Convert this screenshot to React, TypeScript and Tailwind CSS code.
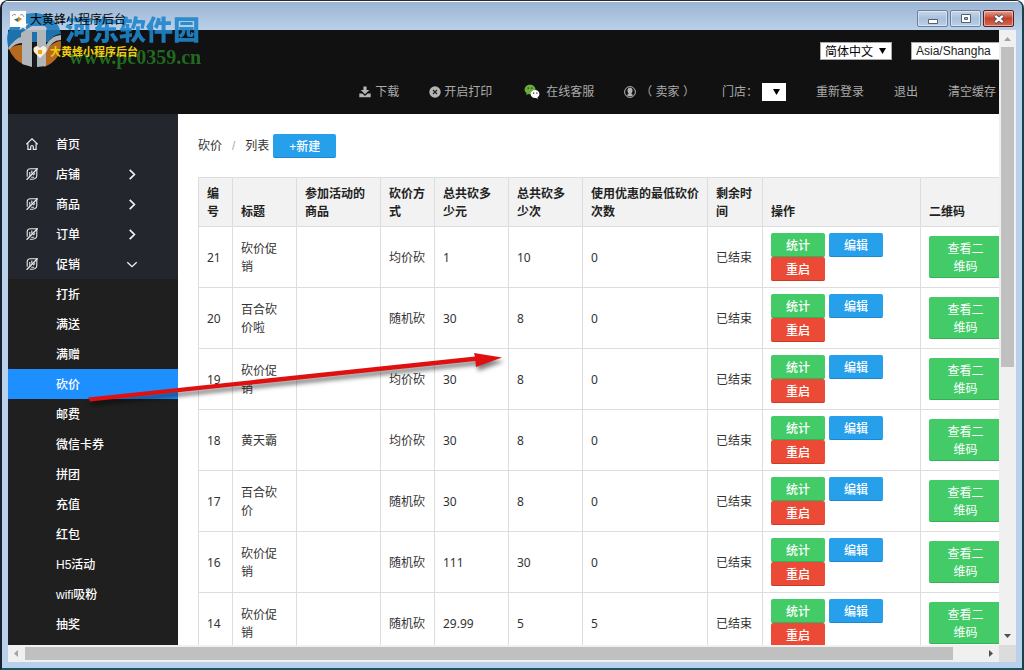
import type { ReactNode } from "react";

const crisp = "font-['Liberation_Sans','Noto_Sans_CJK_SC',sans-serif]";

const menu = ["首页", "店铺", "商品", "订单", "促销"];
const submenu = ["打折", "满送", "满赠", "砍价", "邮费", "微信卡券", "拼团", "充值", "红包", "H5活动", "wifi吸粉", "抽奖"];

const columns = [
  { label: "编号", width: "w-[34px]" },
  { label: "标题", width: "w-16" },
  { label: "参加活动的商品", width: "w-[84px]" },
  { label: "砍价方式", width: "w-[54px]" },
  { label: "总共砍多少元", width: "w-[74px]" },
  { label: "总共砍多少次", width: "w-[74px]" },
  { label: "使用优惠的最低砍价次数", width: "w-[125px]" },
  { label: "剩余时间", width: "w-[55px]" },
  { label: "操作", width: "w-[158px]" },
  { label: "二维码", width: "w-[100px]" },
];

const rows = [
  ["21", "砍价促销", "", "均价砍", "1", "10", "0", "已结束"],
  ["20", "百合砍价啦", "", "随机砍", "30", "8", "0", "已结束"],
  ["19", "砍价促销", "", "均价砍", "30", "8", "0", "已结束"],
  ["18", "黄天霸", "", "均价砍", "30", "8", "0", "已结束"],
  ["17", "百合砍价", "", "随机砍", "30", "8", "0", "已结束"],
  ["16", "砍价促销", "", "随机砍", "111", "30", "0", "已结束"],
  ["14", "砍价促销", "", "随机砍", "29.99", "5", "5", "已结束"],
];

function HomeIcon() {
  return (
    <svg className="size-3" viewBox="0 0 12 12" fill="none" stroke="#e8e8e8" strokeWidth="1.2">
      <path d="M.3 6.4 6 .8l5.700 5.600M1.900 5.200v6.200h2.800V8.300q1.300-1.600 2.600 0v3.100h2.800V5.200" />
    </svg>
  );
}

function LeafIcon() {
  return (
    <svg className="size-3" viewBox="0 0 12 12" fill="none" stroke="#ececec" strokeWidth="1.1">
      <path d="M1.200 8.800V3.800Q1.200.8 4.500.8h6.300v6.400q0 4-4.300 4H3.800" />
      <path d="M.6 11.800 11.600.4" strokeWidth="1.300" />
      <path d="M3.800 7.800V4M5.800 5.600V2.600M5.200 9.200h3M7.200 7.200 9 5.400" />
    </svg>
  );
}

function Chevron({ open }: { open: boolean }) {
  return (
    <svg className="size-3" viewBox="0 0 12 12" fill="none" stroke="#f2f2f2" strokeWidth={open ? "1.3" : "1.7"}>
      <path d={open ? "m1.3 4.2 4.7 4.5 4.7-4.5" : "m3.700 1.900 4.700 4.600-4.700 4.600"} />
    </svg>
  );
}

function DownArrow() {
  return (
    <svg className="pointer-events-none absolute top-[6px] right-[6px] h-[6px] w-[7px]" viewBox="0 0 7 6">
      <path d="M0 0h7L3.500 6Z" fill="#000" />
    </svg>
  );
}

function DownloadIcon() {
  return (
    <svg className="h-3 w-3" viewBox="0 0 12 12" fill="#b5b5b5">
      <path d="M4.400.4h3.200v3.600h2.700L6 8.300 1.700 4h2.700ZM.3 7.400h3L6 10l2.700-2.600h3v3.800H.3Z" />
    </svg>
  );
}

function CloseCircleIcon() {
  return (
    <svg className="h-3 w-3" viewBox="0 0 12 12">
      <circle cx="6" cy="6" r="5.7" fill="#b5b5b5" />
      <path d="m4 4 4 4M8 4 4 8" stroke="#222" strokeWidth="1.2" />
    </svg>
  );
}

function WechatIcon() {
  return (
    <svg className="h-4 w-4" viewBox="0 0 16 16">
      <path d="M6 .8C2.900.8.6 2.900.6 5.600c0 1.700.8 3 2.100 3.800l-.6 1.900 2.200-1.200c3.800.8 7.200-1.300 7.200-4.500C11.500 2.900 9.100.8 6 .8Z" fill="#69ae3b" />
      <path d="M11.200 5.900c-2.600 0-4.600 1.800-4.600 4.200s2.300 4.500 5.500 3.900l1.700.9-.4-1.500c1.200-.7 2-1.900 2-3.300 0-2.300-1.700-4.200-4.200-4.200Z" fill="#fafafa" />
      <path d="M3.600 4.200h1.300M7.200 4.200h1.300M9 9.200h1.200M12.200 9.200h1.200" stroke="#2a2a2a" strokeWidth="1.200" />
    </svg>
  );
}

function UserIcon() {
  return (
    <svg className="h-3 w-3" viewBox="0 0 12 12">
      <circle cx="6" cy="6" r="5.4" fill="none" stroke="#b5b5b5" />
      <path d="M6 1.800c1.900 0 2.700 1.200 2.500 2.900-.2 1.400-.6 2-1 2.500v.8l2 .9A5 5 0 0 1 2.500 8.900l2-.9v-.8C3.800 6.500 3.500 5.800 3.500 4.500 3.500 2.900 4.400 1.800 6 1.800Z" fill="#b5b5b5" />
    </svg>
  );
}

function WindowControls() {
  const base = "flex h-[17px] items-center justify-center rounded-[2px] border shadow-[inset_0_0_0_1px_#ffffff70]";
  const cool = "w-[31px] border-[#6d7f99] bg-linear-to-b from-[#c7d7ea] via-[#a9c0dc] to-[#b9d0e9]";
  return (
    <div className="flex gap-[2px]">
      <button aria-label="最小化" className={`${base} ${cool}`}>
        <svg className="h-3 w-3" viewBox="0 0 12 12"><path d="M1.500 6.500h9v4h-9Z" fill="#fff" stroke="#54606f" /></svg>
      </button>
      <button aria-label="最大化" className={`${base} ${cool}`}>
        <svg className="h-3 w-3" viewBox="0 0 12 12"><path d="M1.500 1.500h9v8h-9Z" fill="#fff" stroke="#54606f" /><path d="M4.500 4.500h3v2h-3Z" fill="#9db7d6" stroke="#54606f" /></svg>
      </button>
      <button aria-label="关闭" className={`${base} w-[31px] border-[#5b1d1d] bg-linear-to-b from-[#dfa091] via-[#c4402c] to-[#d46a50]`}>
        <svg className="h-3 w-3" viewBox="0 0 12 12"><path d="m2 2.500 8 7M10 2.500l-8 7" stroke="#4c4c58" strokeWidth="4" /><path d="m2.300 2.800 7.400 6.400M9.700 2.800 2.300 9.200" stroke="#fff" strokeWidth="2.400" /></svg>
      </button>
    </div>
  );
}

function Watermark() {
  return (
    <div className="pointer-events-none absolute top-2 left-1 flex">
      <svg className="h-[60px] w-[59px] opacity-90" viewBox="0 0 59 60">
        <path d="M1 30C2 15 13 4 28 4s26 10 27 21C50 25 46 28 42 33H12L3 40Q1 35 1 30Z" fill="#1f7dbd" />
        <path d="M3 40Q10 35 19 36v20Q7 51 3 40Z" fill="#c9741f" />
        <path d="M27 34h4v24h-4Z" fill="#1a1d20" />
        <path d="M38 58Q36 45 44 37 50 32 55 32 56 51 38 58Z" fill="#c9741f" />
        <path d="M2 39Q10 29 15 28V24L26 17H38Q42 18 40 22V57l-9 1V23H26V58l-10-3V34Q9 34 3 41Z" fill="#c3c8ce" />
        <path d="M40 36Q46 26 55 26v5Q45 31 40 44Z" fill="#c3c8ce" />
        <path d="m17 11 1.500 3.500 4 .2-3 2.500 1 3.800-3.500-2.200-3.500 2.200 1-3.800-3-2.500 4-.2Z" fill="#e4eaf0" />
      </svg>
      <div className="flex flex-col pt-1 opacity-90">
        <span className="font-['Noto_Sans_CJK_SC',sans-serif] text-[27px] leading-8 font-black text-[#1f86cc]">河东软件园</span>
        <span className="pt-[2px] pl-1 font-['Liberation_Serif',serif] text-[20px] leading-5 font-bold text-[#227522]">www.pc0359.cn</span>
      </div>
    </div>
  );
}

function Action({ tone, children }: { tone: string; children: ReactNode }) {
  return (
    <button className={`h-6 w-[54px] rounded-[2px] border-b pt-[2px] text-xs leading-[21px] font-medium text-white ${tone}`}>{children}</button>
  );
}

export default function App() {
  return (
    <div className={`${crisp} relative flex h-screen flex-col overflow-hidden rounded-t-lg border-t border-l-2 border-r-2 border-b-2 border-t-[#222b3a] border-l-[#182230] border-r-[#17424a] border-b-[#1b5560] bg-[#b9d1ea] text-xs text-[#333]`}>
      <div className="flex h-[29px] shrink-0 items-start justify-between border-t border-white bg-linear-to-b from-[#9bb5d3] to-[#bad0e8] pt-2 pr-2 pl-2">
        <div className="z-10 flex items-center gap-1">
          <svg className="size-4 bg-white" viewBox="0 0 16 16" fill="none">
            <path d="M2 5q2-3 4-1M10 4q3-2 4 2" stroke="#999" />
            <path d="M8 5.500 12 8 8 11Z" fill="#c9922e" />
            <path d="M4 8.500 8 7v4Z" fill="#2f6f74" />
          </svg>
          <span className="pt-[2px] text-black">大黄蜂小程序后台</span>
        </div>
        <WindowControls />
      </div>

      <div className="mx-[6px] mb-[6px] flex min-h-0 flex-1 flex-col">
        <div className="flex min-h-0 flex-1">
          <div className="flex min-w-0 flex-1 flex-col overflow-hidden bg-white">
            <header className="flex h-[84px] shrink-0 flex-col justify-between bg-[#111] pt-3 pb-3 text-[#aaa]">
              <div className="flex items-start justify-between pl-6">
                <div className="z-10 flex items-center gap-[2px] pt-[2px] text-[11px] font-bold text-[#f0cf10]">
                  <svg className="h-4 w-4" viewBox="0 0 16 16"><path d="M8 14 2 8q-2-5 3-6l3 2 3-2q5 1 3 6Z" fill="#fff1d8" /><path d="M6 6h4v4H6Z" fill="#f0a028" /></svg>
                  <span>大黄蜂小程序后台</span>
                </div>
                <div className="-mr-3 flex gap-[19px]">
                  <div className="relative">
                    <select aria-label="语言" className="block h-[18px] w-[72px] appearance-none border border-[#a9a9a9] bg-white pt-px pr-4 pl-1 text-xs leading-4 text-black">
                      <option>简体中文</option>
                    </select>
                    <DownArrow />
                  </div>
                  <select aria-label="时区" className="h-[18px] w-[100px] appearance-none border border-[#a9a9a9] bg-white px-1 text-xs leading-4 text-[#222]">
                    <option>Asia/Shangha</option>
                  </select>
                </div>
              </div>
              <nav className="flex h-5 items-center justify-end pr-[3px] whitespace-nowrap">
                <a href="#download" className="mr-[30px] flex items-center gap-1"><DownloadIcon />下载</a>
                <a href="#print" className="mr-8 flex items-center gap-[3px]"><CloseCircleIcon />开启打印</a>
                <a href="#service" className="mr-[30px] flex items-center gap-[6px]"><WechatIcon />在线客服</a>
                <a href="#seller" className="mr-[27px] flex items-center gap-1"><UserIcon />（ 卖家 ）</a>
                <div className="relative mr-[30px]">
                  <label className="flex items-center gap-1">门店：
                    <select className="h-[18px] w-6 appearance-none bg-white text-black"><option> </option></select>
                  </label>
                  <DownArrow />
                </div>
                <a href="#relogin" className="mr-[30px]">重新登录</a>
                <a href="#exit" className="mr-[30px]">退出</a>
                <a href="#cache">清空缓存</a>
              </nav>
            </header>

            <div className="flex min-h-0 flex-1">
              <aside className="w-[170px] shrink-0 overflow-hidden bg-[#1f1f1f] font-medium text-white">
                <nav className="bg-[#23262d] pt-[15px]">
                  {menu.map((name, i) => (
                    <a key={name} href={`#${name}`} className="flex h-[30px] items-center pr-10 pl-[18px]">
                      {i === 0 ? <HomeIcon /> : <LeafIcon />}
                      <span className="ml-[18px] flex-1 pt-[2px]">{name}</span>
                      {i > 0 && <Chevron open={i === 4} />}
                    </a>
                  ))}
                </nav>
                <nav>
                  {submenu.map((name) => (
                    <a key={name} href={`#${name}`} className={`flex h-[30px] items-center pt-[2px] pl-12 ${name === "砍价" ? "bg-[#1e8fff]" : ""}`}>{name}</a>
                  ))}
                </nav>
              </aside>

              <main className="min-w-0 flex-1 overflow-hidden pt-5 pl-5">
                <div className="mb-[19px] flex h-6 items-center">
                  <span>砍价</span><span className="mx-[10px] text-[#aaa]">/</span><span>列表</span>
                  <button className="ml-1 h-6 w-[63px] rounded-[2px] border-b border-[#1c86d3] bg-[#27a0ec] pt-[2px] font-medium text-white">+新建</button>
                </div>
                <table className="w-[822px] table-fixed border-collapse font-['Noto_Sans','Noto_Sans_CJK_SC',sans-serif] leading-[18px]">
                  <thead className="bg-[#f2f2f2] font-['Liberation_Sans','Noto_Sans_CJK_SC',sans-serif]">
                    <tr className="h-[49px]">
                      {columns.map((c) => (
                        <th key={c.label} className={`${c.width} border border-[#ddd] px-2 pt-[7px] pb-[5px] text-left align-bottom font-bold text-[#222]`}>{c.label}</th>
                      ))}
                    </tr>
                  </thead>
                  <tbody>
                    {rows.map((r) => (
                      <tr key={r[0]} className="h-[61px]">
                        {r.map((cell, i) => (
                          <td key={columns[i].label} className="border border-[#ddd] px-2 pt-[2px] pb-0">{cell}</td>
                        ))}
                        <td className="border border-[#ddd] px-2 py-0">
                          <div className="flex flex-wrap gap-x-1">
                            <Action tone="bg-[#43cb68] border-[#35b158]">统计</Action>
                            <Action tone="bg-[#27a0ec] border-[#1c86d3]">编辑</Action>
                            <Action tone="bg-[#eb4b36] border-[#cf3a27]">重启</Action>
                          </div>
                        </td>
                        <td className="border border-[#ddd] px-2 py-0">
                          <button className="block h-[42px] w-[73px] rounded-[2px] border-b border-[#35b158] bg-[#43cb68] px-4 pt-[2px] leading-[18px] text-white">查看二维码</button>
                        </td>
                      </tr>
                    ))}
                  </tbody>
                </table>
              </main>
            </div>
          </div>

          <div className="flex w-[17px] shrink-0 flex-col items-center bg-[#f0f0f0]">
            <svg className="h-[17px] w-[17px] shrink-0" viewBox="0 0 17 17"><path d="m5 11 3.500-4 3.500 4Z" fill="#a3a3a3" /></svg>
            <div className="h-[320px] w-[13px] bg-[#c0c0c0]" />
            <svg className="mt-auto h-[17px] w-[17px] shrink-0" viewBox="0 0 17 17"><path d="m5 6 3.500 4 3.500-4Z" fill="#505050" /></svg>
          </div>
        </div>
        <div className="flex h-[17px] shrink-0 items-center bg-[#f0f0f0]">
          <svg className="h-[17px] w-[17px] shrink-0" viewBox="0 0 17 17"><path d="M10 5 6 8.500l4 3.500Z" fill="#a3a3a3" /></svg>
          <div className="flex flex-1"><div className="h-[13px] w-[97%] bg-[#c0c0c0]" /></div>
          <svg className="h-[17px] w-[17px] shrink-0" viewBox="0 0 17 17"><path d="m7 5 4 3.500L7 12Z" fill="#505050" /></svg>
          <div className="h-[17px] w-[17px] shrink-0 bg-[#dcdcdc]" />
        </div>
      </div>

      <Watermark />
      <svg className="pointer-events-none absolute top-[340px] left-[80px] h-20 w-[430px] drop-shadow-[2px_4px_2px_#00000080]" viewBox="0 0 430 80">
        <path d="M6 56.500 393 15.500 392 12l28 4.500L394 26l-.6-6L8 60.500Z" fill="#e01010" />
      </svg>
    </div>
  );
}
